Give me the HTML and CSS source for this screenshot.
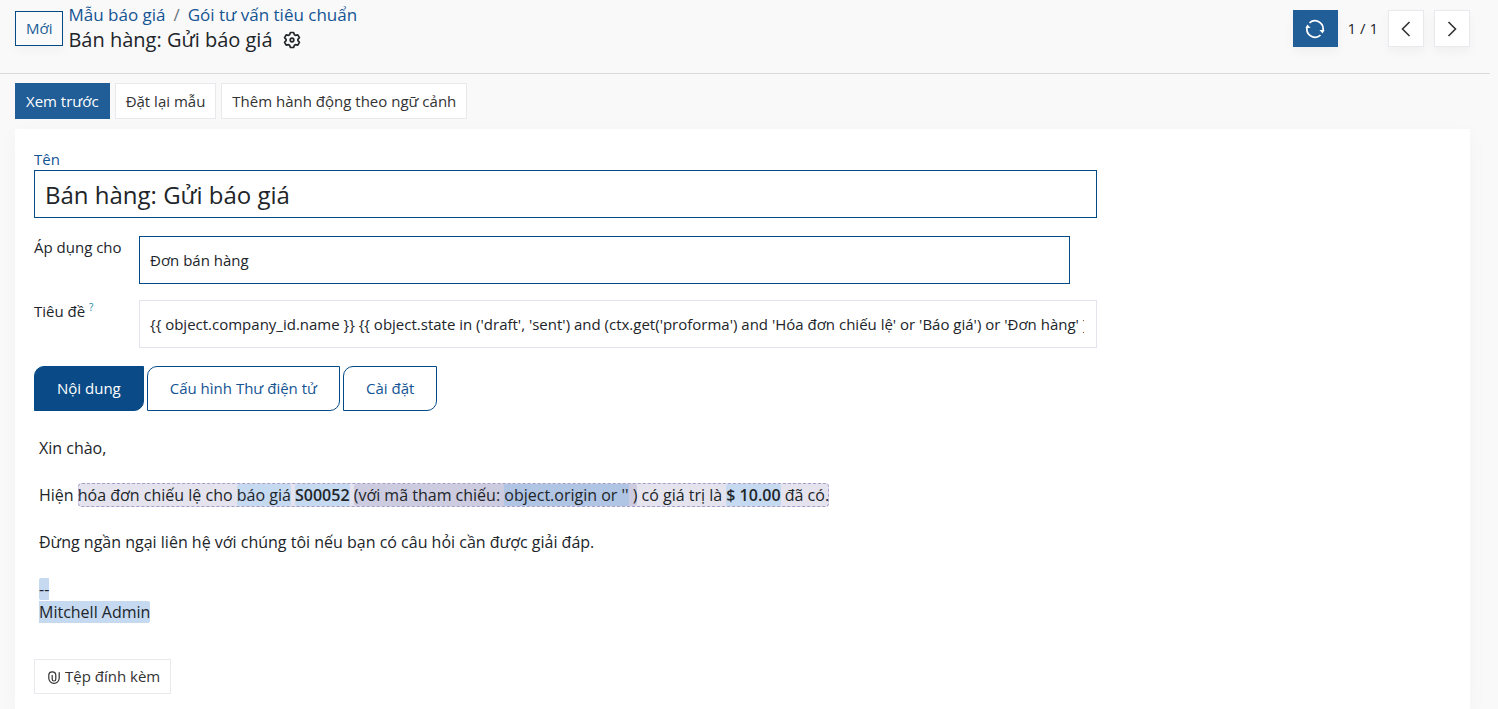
FILE: index.html
```html
<!DOCTYPE html>
<html lang="vi">
<head>
<meta charset="utf-8">
<title>Bán hàng: Gửi báo giá</title>
<link rel="stylesheet" href="styles.css">
</head>
<body>
<header class="control-panel">
  <button class="btn btn-outline" type="button">Mới</button>
  <div class="heading">
    <nav class="breadcrumb"><a href="#">Mẫu báo giá</a><span class="sep">/</span><a href="#">Gói tư vấn tiêu chuẩn</a></nav>
    <div class="title-line">
      <h1 class="title">Bán hàng: Gửi báo giá</h1>
      <button class="icon-btn" type="button" aria-label="Hành động">
        <svg width="18" height="18" viewBox="0 0 18 18" fill="none" stroke="currentColor" stroke-width="1.7" stroke-linejoin="round"><path d="M7.4 1.5h3.2l.8 2.2 1.1.6 2.3-.4 1.6 2.8L14.9 8.400v1.200l1.500 1.700-1.600 2.800-2.300-.4-1.100.6-.8 2.200H7.400l-.8-2.200-1.100-.6-2.300.4-1.600-2.800 1.500-1.700V8.400L1.600 6.700l1.600-2.800 2.300.4 1.100-.6z"/><circle cx="9" cy="9" r="1.8"/></svg>
      </button>
    </div>
  </div>
  <div class="pager">
    <button class="btn btn-primary btn-refresh" type="button" aria-label="Làm mới">
      <svg width="20" height="20" viewBox="0 0 20 20" fill="none" stroke="currentColor" stroke-width="1.7"><path d="M4.500 3.800A8.300 8.300 0 0 1 18.100 11M15.500 16.200A8.300 8.300 0 0 1 1.900 9"/><path d="M14.400 11h5.200l-2 3.400zM.4 9h5.200L2.400 5.600z" fill="currentColor" stroke="none"/></svg>
    </button>
    <span class="count">1 / 1</span>
    <button class="btn btn-light btn-nav" type="button" aria-label="Trước">
      <svg width="18" height="18" viewBox="0 0 18 18" fill="none" stroke="currentColor" stroke-width="1.6"><path d="M12.500 2 5.500 9l7 7"/></svg>
    </button>
    <button class="btn btn-light btn-nav" type="button" aria-label="Sau">
      <svg width="18" height="18" viewBox="0 0 18 18" fill="none" stroke="currentColor" stroke-width="1.6"><path d="m5.500 2 7 7-7 7"/></svg>
    </button>
  </div>
</header>
<main class="content">
  <div class="statusbar">
    <button class="btn btn-primary" type="button">Xem trước</button>
    <button class="btn btn-light" type="button">Đặt lại mẫu</button>
    <button class="btn btn-light" type="button">Thêm hành động theo ngữ cảnh</button>
  </div>
  <section class="sheet">
    <form class="form">
      <div class="name-field">
        <label for="name">Tên</label>
        <input class="input input-title required" id="name" type="text" value="Bán hàng: Gửi báo giá">
      </div>
      <div class="row">
        <label for="model">Áp dụng cho</label>
        <input class="input required input-short" id="model" type="text" value="Đơn bán hàng">
      </div>
      <div class="row">
        <label for="subject">Tiêu đề <sup class="help">?</sup></label>
        <input class="input input-translate" id="subject" type="text" value="{{ object.company_id.name }} {{ object.state in ('draft', 'sent') and (ctx.get('proforma') and 'Hóa đơn chiếu lệ' or 'Báo giá') or 'Đơn hàng' }} (Ref {{ object.name or 'n/a' }})">
      </div>
    </form>
    <div class="tabs" role="tablist">
      <button class="tab active" type="button" role="tab" aria-selected="true">Nội dung</button>
      <button class="tab" type="button" role="tab" aria-selected="false">Cấu hình Thư điện tử</button>
      <button class="tab" type="button" role="tab" aria-selected="false">Cài đặt</button>
    </div>
    <div class="message">
      <p>Xin chào,</p>
      <p>Hiện <span class="branch">hóa đơn chiếu lệ cho <span class="expr">báo giá</span> <b class="expr">S00052</b> <span class="cond">(với mã tham chiếu: <span class="expr-deep">object.origin or ''</span> )</span> có giá trị là <b class="expr">$ 10.00</b> đã có.</span></p>
      <p>Đừng ngần ngại liên hệ với chúng tôi nếu bạn có câu hỏi cần được giải đáp.</p>
      <p><span class="signature">--<br>Mitchell Admin</span></p>
    </div>
    <button class="btn btn-light btn-attach" type="button">
      <svg width="12" height="14" viewBox="0 0 12 14" fill="none" stroke="currentColor" stroke-width="1.2" stroke-linecap="round"><path d="M11.200 2.500v5.700a5.200 5.200 0 0 1-10.400 0V5.300a3.500 3.500 0 0 1 7 0v3.900a1.800 1.800 0 0 1-3.600 0V5.300"/></svg>
      Tệp đính kèm
    </button>
  </section>
</main>
</body>
</html>
```
FILE: styles.css
```css
* { box-sizing: border-box; }
html { background: #f9f9f9; }
body {
  display: flex;
  flex-direction: column;
  min-height: 100vh;
  margin: 0;
  padding-right: 8px;
  color: #212529;
  font: 15px/21px "Open Sans", "Noto Sans", sans-serif;
}
button, input { font: inherit; color: inherit; }
button { cursor: pointer; }
svg { display: block; flex: none; }
a { color: #145493; text-decoration: none; }

.control-panel {
  display: flex;
  align-items: flex-start;
  min-height: 74px;
  padding: 3px 20px 0 15px;
  border-bottom: 1px solid #d8dadd;
}
.btn {
  display: inline-flex;
  align-items: center;
  justify-content: center;
  height: 36px;
  padding: 0 10px;
  border: 1px solid #e7e9ed;
  background: #fff;
  white-space: nowrap;
}
.btn-primary { border-color: #215d97; background: #215d97; color: #fff; }
.btn-light { color: #333; }
.btn-outline {
  height: 35px;
  margin: 8px 5px 0 0;
  border-color: #044a87;
  background: #fafafa;
  color: #215d97;
  box-shadow: 0 5px 10px rgba(0, 0, 0, 0.03);
}
.breadcrumb { font-size: 17px; line-height: 24px; }
.sep { padding: 0 8px; color: #6c757d; }
.title-line { display: flex; align-items: center; gap: 10px; }
.title { margin: 0; font-size: 20px; font-weight: 400; line-height: 26px; }
.icon-btn { padding: 0; border: 0; background: none; }
.pager { display: flex; align-items: center; margin: 7px 0 0 auto; }
.pager .btn { height: 37px; box-shadow: 0 5px 10px rgba(0, 0, 0, 0.04); }
.pager .btn-refresh { width: 45px; padding: 0; }
.count { padding: 0 10px; }
.btn-nav { width: 36px; padding: 0; }
.btn-nav + .btn-nav { margin-left: 10px; }

.content {
  display: flex;
  flex: 1;
  flex-direction: column;
  padding: 9px 20px 0 15px;
}
.statusbar { display: flex; gap: 5px; }
.sheet {
  flex: 1;
  margin-top: 10px;
  padding: 20px 19px 15px;
  background: #fff;
  box-shadow: 0 5px 20px rgba(0, 0, 0, 0.03);
}
.form { width: 75%; display: flex; flex-direction: column; }
.name-field { display: flex; flex-direction: column; color: #145493; }
.input {
  width: 100%;
  min-width: 0;
  height: 48px;
  padding: 0 10px;
  border: 1px solid #e4e4ee;
  border-radius: 0;
  background: #fff;
  color: #212529;
}
.required { border-color: #044a87; }
.input-title { font-size: 24px; }
.input-translate { padding-right: 12px; }
.row { display: grid; grid-template-columns: 105px 1fr; }
.row label { padding-top: 1px; }
.row .input-short { width: calc(100% - 27px); }
.name-field + .row { margin-top: 18px; }
.row + .row { margin-top: 16px; }
.help { color: #17889c; font-size: 10px; line-height: 0; }

.tabs { display: flex; gap: 3px; margin-top: 18px; }
.tab {
  height: 45px;
  padding: 0 22px;
  border: 1px solid #044a87;
  border-radius: 10px 0;
  background: #fff;
  color: #145493;
}
.tab.active { background: #0a4b87; color: #fff; }

.message {
  padding: 26px 5px 0;
  font-size: 16px;
  line-height: 23px;
}
.message p { margin: 0 0 24px; }
.branch {
  padding: 1px 0;
  border-radius: 4px;
  outline: 1px dashed #a5a0cb;
  outline-offset: -1px;
  background: #e5e4ee;
}
.expr { border-radius: 2px; background: #c5d9f1; }
.cond { border-radius: 2px; background: #cccbdf; }
.expr-deep { border-radius: 2px; background: #b0c4e4; }
.signature { border-radius: 2px; background: #c5d9f1; }
.message b { font-weight: 600; }
.btn-attach { height: 35px; margin-top: 11px; padding-left: 13px; gap: 5px; }
```
